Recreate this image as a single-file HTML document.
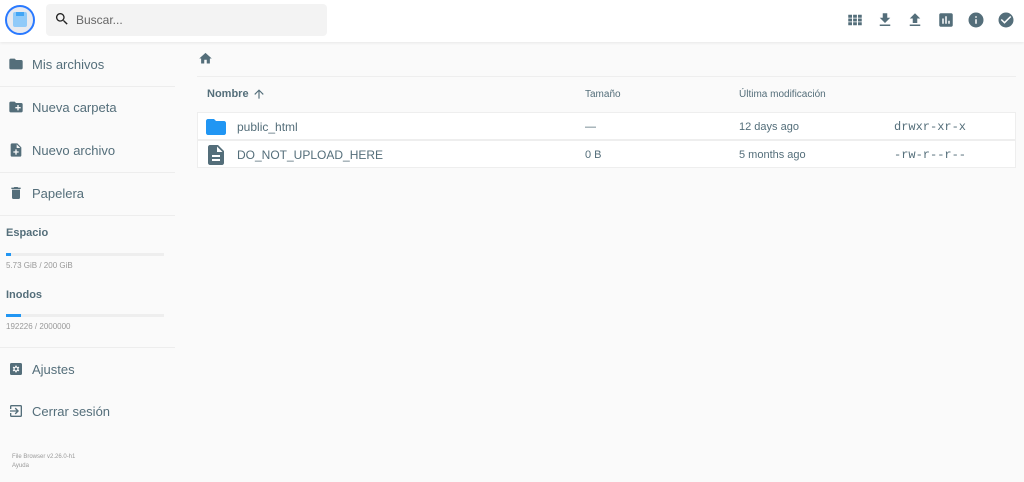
<!DOCTYPE html>
<html><head><style>
*{margin:0;padding:0;box-sizing:border-box}
body{width:1024px;height:482px;background:#fafafa;font-family:"Liberation Sans",sans-serif;color:#546e7a;position:relative;overflow:hidden}
.hdr{position:absolute;left:0;top:0;width:1024px;height:42px;background:#fff;box-shadow:0 1px 3px rgba(0,0,0,.08)}
.abs{position:absolute}
.sb{font-size:13px;color:#546e7a}
.sep{position:absolute;left:0;width:175px;height:1px;background:rgba(0,0,0,.05)}
svg{display:block}
.bar{position:absolute;left:6px;width:158px;height:3px;background:#eee}
.bar i{display:block;height:3px;background:#2196f3}
.row{position:absolute;left:197px;width:819px;height:28px;background:#fff;border:1px solid #eee;font-size:11px;color:#546e7a}
.row span{position:absolute;top:8px}
</style></head><body>
<div class="hdr">
 <div class="abs" style="left:5px;top:5px;width:30px;height:30px;border-radius:50%;border:2px solid #2979ff;background:#e8eaf0"></div>
 <div class="abs" style="left:13px;top:12px;width:14px;height:15px;background:#90caf9;border-radius:2px"></div>
 <div class="abs" style="left:16px;top:12px;width:8px;height:4px;background:#42a5f5"></div>
 <div class="abs" style="left:46px;top:4px;width:281px;height:32px;background:#f3f3f3;border-radius:4px"></div>
 <svg class="abs" style="left:54px;top:11px" width="16" height="16" viewBox="0 0 24 24"><path fill="#222" d="M15.5 14h-.8l-.3-.3A6.5 6.5 0 1 0 9.5 16a6.5 6.5 0 0 0 4.2-1.6l.3.3v.8l5 5 1.5-1.5-5-5zm-6 0C7 14 5 12 5 9.5S7 5 9.5 5 14 7 14 9.5 12 14 9.5 14z"/></svg>
 <div class="abs" style="left:76px;top:13px;font-size:12px;color:#666">Buscar...</div>
 <svg class="abs" style="left:846px;top:11px" width="18" height="18" viewBox="0 0 24 24"><path fill="#546e7a" d="M3 5h5v4H3zM9.5 5h5v4h-5zM16 5h5v4h-5zM3 10h5v4H3zM9.5 10h5v4h-5zM16 10h5v4h-5zM3 15h5v4H3zM9.5 15h5v4h-5zM16 15h5v4h-5z"/></svg>
 <svg class="abs" style="left:876px;top:11px" width="18" height="18" viewBox="0 0 24 24"><path fill="#546e7a" d="M19 9h-4V3H9v6H5l7 7 7-7zM5 18v2h14v-2H5z"/></svg>
 <svg class="abs" style="left:906px;top:11px" width="18" height="18" viewBox="0 0 24 24"><path fill="#546e7a" d="M9 16h6v-6h4l-7-7-7 7h4zm-4 2h14v2H5z"/></svg>
 <svg class="abs" style="left:937px;top:11px" width="18" height="18" viewBox="0 0 24 24"><path fill="#546e7a" d="M19 3H5c-1.1 0-2 .9-2 2v14c0 1.1.9 2 2 2h14c1.1 0 2-.9 2-2V5c0-1.1-.9-2-2-2zM9 17H7v-7h2v7zm4 0h-2V7h2v10zm4 0h-2v-4h2v4z"/></svg>
 <svg class="abs" style="left:967px;top:11px" width="18" height="18" viewBox="0 0 24 24"><path fill="#546e7a" d="M12 2a10 10 0 1 0 0 20 10 10 0 0 0 0-20zm1 15h-2v-6h2v6zm0-8h-2V7h2v2z"/></svg>
 <svg class="abs" style="left:997px;top:11px" width="18" height="18" viewBox="0 0 24 24"><path fill="#546e7a" d="M12 2a10 10 0 1 0 0 20 10 10 0 0 0 0-20zm-2 15l-5-5 1.4-1.4 3.6 3.6 7.6-7.6L19 8l-9 9z"/></svg>
</div>

<svg class="abs" style="left:8px;top:56px" width="16" height="16" viewBox="0 0 24 24"><path fill="#546e7a" d="M10 4H4c-1.1 0-2 .9-2 2v12c0 1.1.9 2 2 2h16c1.1 0 2-.9 2-2V8c0-1.1-.9-2-2-2h-8l-2-2z"/></svg>
<div class="abs sb" style="left:32px;top:57px">Mis archivos</div>
<div class="sep" style="top:86px"></div>
<svg class="abs" style="left:8px;top:99px" width="16" height="16" viewBox="0 0 24 24"><path fill="#546e7a" d="M20 6h-8l-2-2H4c-1.1 0-2 .9-2 2v12c0 1.1.9 2 2 2h16c1.1 0 2-.9 2-2V8c0-1.1-.9-2-2-2zm-1 8h-3v3h-2v-3h-3v-2h3V9h2v3h3v2z"/></svg>
<div class="abs sb" style="left:32px;top:100px">Nueva carpeta</div>
<svg class="abs" style="left:8px;top:142px" width="16" height="16" viewBox="0 0 24 24"><path fill="#546e7a" d="M14 2H6c-1.1 0-2 .9-2 2v16c0 1.1.9 2 2 2h12c1.1 0 2-.9 2-2V8l-6-6zm2 14h-3v3h-2v-3H8v-2h3v-3h2v3h3v2zm-3-7V3.5L18.5 9H13z"/></svg>
<div class="abs sb" style="left:32px;top:143px">Nuevo archivo</div>
<div class="sep" style="top:172px"></div>
<svg class="abs" style="left:8px;top:185px" width="16" height="16" viewBox="0 0 24 24"><path fill="#546e7a" d="M6 19c0 1.1.9 2 2 2h8c1.1 0 2-.9 2-2V7H6v12zM19 4h-3.5l-1-1h-5l-1 1H5v2h14V4z"/></svg>
<div class="abs sb" style="left:32px;top:186px">Papelera</div>
<div class="sep" style="top:215px"></div>
<div class="abs" style="left:6px;top:227px;font-size:11px;font-weight:bold">Espacio</div>
<div class="bar" style="top:253px"><i style="width:5px"></i></div>
<div class="abs" style="left:6px;top:261px;font-size:8px;color:#999">5.73 GiB / 200 GiB</div>
<div class="abs" style="left:6px;top:289px;font-size:11px;font-weight:bold">Inodos</div>
<div class="bar" style="top:314px"><i style="width:15px"></i></div>
<div class="abs" style="left:6px;top:322px;font-size:8px;color:#999">192226 / 2000000</div>
<div class="sep" style="top:347px"></div>
<svg class="abs" style="left:8px;top:361px" width="16" height="16" viewBox="0 0 24 24"><path fill="#546e7a" fill-rule="evenodd" d="M5 3h14c1.1 0 2 .9 2 2v14c0 1.1-.9 2-2 2H5c-1.1 0-2-.9-2-2V5c0-1.1.9-2 2-2zm6 4l-.3 1.6-1.2.6-1.4-.7-1 1.7 1.2 1v1.6l-1.2 1 1 1.7 1.4-.6 1.2.7.3 1.4h2l.3-1.4 1.2-.7 1.4.6 1-1.7-1.2-1v-1.6l1.2-1-1-1.7-1.4.7-1.2-.6L13 7h-2zm1 3a2 2 0 1 1 0 4 2 2 0 0 1 0-4z"/></svg>
<div class="abs sb" style="left:32px;top:362px">Ajustes</div>
<svg class="abs" style="left:8px;top:403px" width="16" height="16" viewBox="0 0 24 24"><path fill="#546e7a" d="M10.1 15.6l1.4 1.4 5-5-5-5-1.4 1.4 2.6 2.6H3v2h9.7l-2.6 2.6zM19 3H5c-1.1 0-2 .9-2 2v4h2V5h14v14H5v-4H3v4c0 1.1.9 2 2 2h14c1.1 0 2-.9 2-2V5c0-1.1-.9-2-2-2z"/></svg>
<div class="abs sb" style="left:32px;top:404px">Cerrar sesión</div>
<div class="abs" style="left:12px;top:453px;font-size:6px;color:#999;line-height:9px">File Browser v2.26.0-h1<br>Ayuda</div>

<svg class="abs" style="left:198px;top:51px" width="15" height="15" viewBox="0 0 24 24"><path fill="#546e7a" d="M10 20v-6h4v6h5v-8h3L12 3 2 12h3v8z"/></svg>
<div class="abs" style="left:197px;top:76px;width:819px;height:1px;background:#eee"></div>
<div class="abs" style="left:207px;top:88px;font-size:11px;font-weight:bold">Nombre</div>
<svg class="abs" style="left:252px;top:87px" width="14" height="14" viewBox="0 0 24 24"><path fill="#546e7a" d="M4 12l1.4 1.4L11 7.8V20h2V7.8l5.6 5.6L20 12l-8-8z"/></svg>
<div class="abs" style="left:585px;top:89px;font-size:10px">Tamaño</div>
<div class="abs" style="left:739px;top:89px;font-size:10px">Última modificación</div>

<div class="row" style="top:112px">
 <svg class="abs" style="left:6px;top:2px" width="24" height="24" viewBox="0 0 24 24"><path fill="#2196f3" d="M10 4H4c-1.1 0-2 .9-2 2v12c0 1.1.9 2 2 2h16c1.1 0 2-.9 2-2V8c0-1.1-.9-2-2-2h-8l-2-2z"/></svg>
 <span style="left:39px;font-size:12px;top:7px">public_html</span><span style="left:387px">—</span><span style="left:541px">12 days ago</span><span style="left:696px;font-family:'Liberation Mono',monospace;font-size:12px;top:7px">drwxr-xr-x</span>
</div>
<div class="row" style="top:140px">
 <svg class="abs" style="left:6px;top:2px" width="24" height="24" viewBox="0 0 24 24"><path fill="#546e7a" d="M14 2H6c-1.1 0-2 .9-2 2v16c0 1.1.9 2 2 2h12c1.1 0 2-.9 2-2V8l-6-6zm2 16H8v-2h8v2zm0-4H8v-2h8v2zm-3-5V3.5L18.5 9H13z"/></svg>
 <span style="left:39px;font-size:12px;top:7px">DO_NOT_UPLOAD_HERE</span><span style="left:387px">0 B</span><span style="left:541px">5 months ago</span><span style="left:696px;font-family:'Liberation Mono',monospace;font-size:12px;top:7px">-rw-r--r--</span>
</div>
</body></html>
